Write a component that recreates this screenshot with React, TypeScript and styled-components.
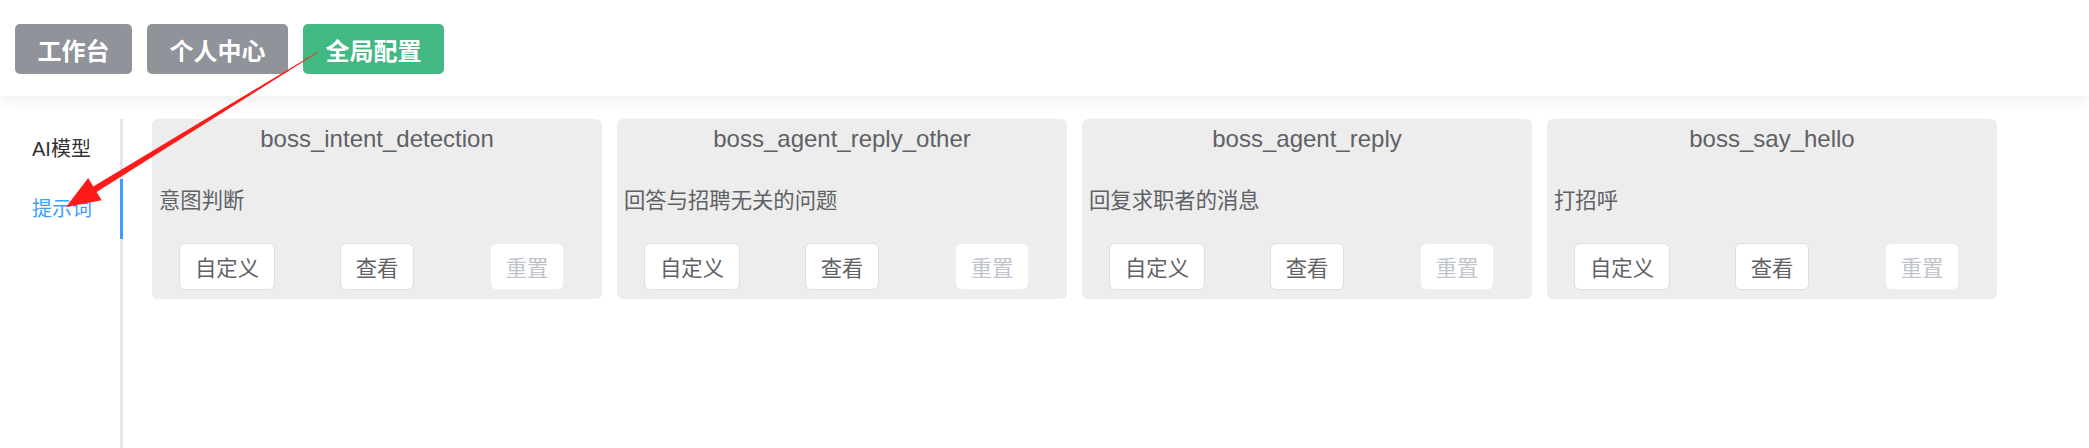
import React from "react";
import styled, { createGlobalStyle } from "styled-components";

const GlobalStyle = createGlobalStyle`
  html, body {
    margin: 0;
    padding: 0;
    background: #fff;
  }
  body {
    font-family: "Liberation Sans", "Noto Sans CJK SC", sans-serif;
    color: #606266;
  }
`;

const Page = styled.div`
  position: relative;
  width: 2089px;
  min-height: 448px;
  overflow: hidden;
`;

const Header = styled.header`
  display: flex;
  gap: 15px;
  padding: 24px 15px 22px;
  background: #fff;
  box-shadow: 0 3px 16px 0 rgba(0, 0, 0, 0.08);
  position: relative;
  z-index: 1;
`;

const NavButton = styled.button<{ $active?: boolean }>`
  height: 50px;
  padding: 0 22.5px;
  border: none;
  border-radius: 5px;
  background: ${(p) => (p.$active ? "#42b983" : "#909399")};
  color: #fff;
  font-family: "Liberation Sans", "Noto Sans CJK SC", sans-serif;
  font-size: 24px;
  font-weight: 700;
  cursor: pointer;
`;

const Body = styled.div`
  display: flex;
  align-items: flex-start;
  margin-top: 23px;
`;

const Sidebar = styled.nav`
  width: 120px;
  min-height: 329px;
  border-right: 3px solid #e4e7ed;
  display: flex;
  flex-direction: column;
`;

const Tab = styled.div<{ $active?: boolean }>`
  height: 60px;
  line-height: 60px;
  padding-left: 32px;
  margin-right: -3px;
  font-size: 20px;
  color: ${(p) => (p.$active ? "#409eff" : "#303133")};
  border-right: 3px solid ${(p) => (p.$active ? "#409eff" : "transparent")};
  cursor: pointer;
`;

const CardList = styled.div`
  display: flex;
  gap: 15px;
  margin-left: 29px;
`;

const Card = styled.div`
  width: 450px;
  box-sizing: border-box;
  padding: 4px 0 9px;
  background: #ededed;
  border-radius: 6px;
`;

const CardTitle = styled.div`
  text-align: center;
  font-size: 24px;
  line-height: 32px;
  color: #5f6166;
`;

const CardDesc = styled.div`
  padding: 31px 7px 27px;
  font-size: 21.33px;
  line-height: 30px;
  color: #5f6166;
`;

const Actions = styled.div`
  display: grid;
  grid-template-columns: repeat(3, 1fr);
  justify-items: center;
`;

const ActionButton = styled.button<{ $disabled?: boolean }>`
  height: 47px;
  padding: 0 15px;
  box-sizing: border-box;
  background: #fff;
  border: 1px solid ${(p) => (p.$disabled ? "#ebeef5" : "#dcdfe6")};
  border-radius: 6px;
  color: ${(p) => (p.$disabled ? "#c0c4cc" : "#5f6166")};
  font-family: "Liberation Sans", "Noto Sans CJK SC", sans-serif;
  font-size: 21.33px;
  cursor: ${(p) => (p.$disabled ? "not-allowed" : "pointer")};
`;

const Annotation = styled.svg`
  position: absolute;
  top: 0;
  left: 0;
  pointer-events: none;
  z-index: 2;
`;

const prompts = [
  { name: "boss_intent_detection", desc: "意图判断" },
  { name: "boss_agent_reply_other", desc: "回答与招聘无关的问题" },
  { name: "boss_agent_reply", desc: "回复求职者的消息" },
  { name: "boss_say_hello", desc: "打招呼" },
];

const App = () => {
  return (
    <Page>
      <GlobalStyle />
      <Header>
        <NavButton>工作台</NavButton>
        <NavButton>个人中心</NavButton>
        <NavButton $active>全局配置</NavButton>
      </Header>
      <Body>
        <Sidebar>
          <Tab>AI模型</Tab>
          <Tab $active>提示词</Tab>
        </Sidebar>
        <CardList>
          {prompts.map((p) => (
            <Card key={p.name}>
              <CardTitle>{p.name}</CardTitle>
              <CardDesc>{p.desc}</CardDesc>
              <Actions>
                <ActionButton>自定义</ActionButton>
                <ActionButton>查看</ActionButton>
                <ActionButton $disabled>重置</ActionButton>
              </Actions>
            </Card>
          ))}
        </CardList>
      </Body>
      {/* red arrow drawn over the page, pointing at the prompt tab */}
      <Annotation width="2089" height="448" viewBox="0 0 2089 448">
        <polygon
          points="318.2,52.3 96.6,191.9 101.8,200.3 66,207 88.2,178.1 93.3,186.5 317.8,51.7"
          fill="#ff1a1a"
        />
      </Annotation>
    </Page>
  );
};

export default App;
